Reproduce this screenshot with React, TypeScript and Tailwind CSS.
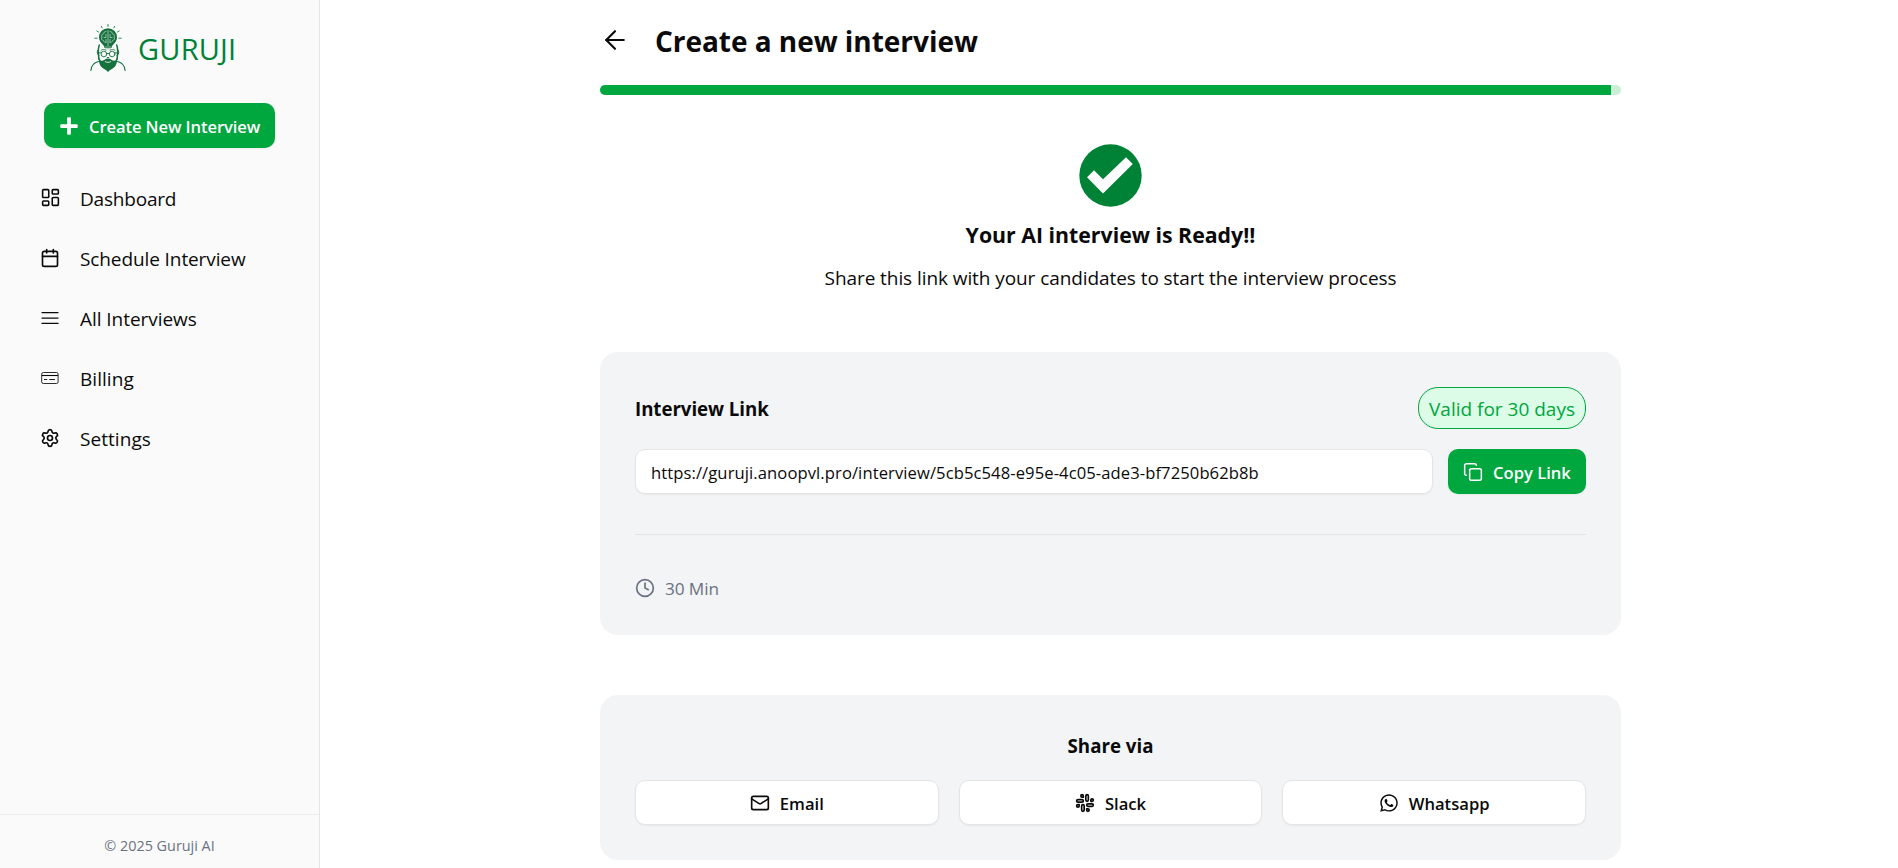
import React from "react";
import { ArrowLeft, Calendar, Clock, Copy, LayoutDashboard, Mail, Settings, Slack } from "lucide-react";
import { FaWhatsapp } from "react-icons/fa6";
import { FaPlus } from "react-icons/fa";

function Logo() {
  return (
    <svg viewBox="0 0 40 50" className="h-[50px] w-10 shrink-0" fill="none" stroke="#17713f" strokeLinecap="round">
      <path d="M20 1.400v2M13.300 3.400l.8 1.500M26.700 3.400l-.8 1.500M8.900 8l1.600 1M31.100 8l-1.600 1M6.800 15.200h2.200M33.200 15.200H31" strokeWidth=".9" />
      <path d="M20 5.200a9 9 0 0 0-9 9c0 3.400 1.900 5.400 3.700 7.300 1 1.100 1.500 2 1.800 3.500h7c.3-1.500.8-2.400 1.800-3.500 1.800-1.900 3.700-3.900 3.700-7.300a9 9 0 0 0-9-9z" fill="#17713f" stroke="none" />
      <path d="M20 7.500v15M18 8.500c-2 0-2.400 1.300-2.200 2.200-2 .2-2.600 2-1.800 3.300-1 1.500-.2 3.300 1.500 3.500.2 1.500 1.200 2 2.500 1.800M22 8.500c2 0 2.400 1.300 2.200 2.200 2 .2 2.600 2 1.800 3.300 1 1.500.2 3.300-1.500 3.500-.2 1.500-1.200 2-2.500 1.800M18 11.500v3h-2M22 11.500v3h2M18 16.500v3M22 16.500v3" stroke="#b9d6c5" strokeWidth=".75" />
      <path d="M17 24h6M17.500 25.800h5" stroke="#8fbca2" strokeWidth=".9" />
      <path d="M11.300 22c-.8 2-1 4-1 6.500l.6 8M28.700 22c.8 2 1 4 1 6.500l-.6 8" strokeWidth="1.500" />
      <path d="M10 27c-1.300.5-1 4.500.8 5.500M30 27c1.300.5 1 4.500-.8 5.500" strokeWidth="1" />
      <path d="M13 27.300c1.500-1.200 3.500-1.200 5 0M27 27.300c-1.500-1.200-3.500-1.200-5 0" strokeWidth=".8" />
      <circle cx="15.900" cy="31" r="2.800" strokeWidth=".9" />
      <circle cx="24.100" cy="31" r="2.800" strokeWidth=".9" />
      <path d="M18.700 30.500h2.600M11 29.800h2M29 29.800h-2M19.200 34.500h1.600" strokeWidth=".9" />
      <path d="M10.800 33.500c.5 3 1.700 4.300 3 4.300 2.200 0 3.200-2.300 6.200-2.300s4 2.300 6.200 2.300c1.300 0 2.500-1.300 3-4.300.3 3.500-.3 6.800-1.600 9.300C26 45.500 22 46.500 20 49c-2-2.500-6-3.500-7.600-6.200-1.300-2.500-1.900-5.800-1.600-9.300z" fill="#17713f" stroke="none" />
      <path d="M17.300 38.700c1.500.9 3.900.9 5.400 0" stroke="#e6f0ea" strokeWidth=".9" />
      <path d="M10.500 38.500C6 39.700 3.200 41.700 2.900 47.500M29.500 38.500c4.500 1.200 7.300 3.200 7.600 9" strokeWidth="1.100" />
    </svg>
  );
}

function LinesIcon() {
  return (
    <svg viewBox="0 0 20 20" className="size-5" stroke="currentColor" strokeLinecap="round">
      <path d="M2 4.600h16M2 10h16M2 15.400h16" strokeWidth="1.250" />
    </svg>
  );
}

function CardIcon() {
  return (
    <svg viewBox="0 0 20 20" className="size-5" fill="none" stroke="currentColor">
      <rect x="1.700" y="4.500" width="16.400" height="11" rx="1.600" strokeWidth=".85" />
      <path d="M1.700 7.500h16.400" strokeWidth="1.100" />
      <path d="M4 11.500h3.200M9.300 11.500h5.700" strokeWidth=".9" />
    </svg>
  );
}

const nav = [
  { label: "Dashboard", icon: <LayoutDashboard size={21} strokeWidth={1.8} className="-mt-px -ml-[0.5px]" />, cls: "tracking-[-0.2px]" },
  { label: "Schedule Interview", icon: <Calendar size={20} />, cls: "tracking-[-0.1px]" },
  { label: "All Interviews", icon: <LinesIcon />, cls: "tracking-[-0.05px]" },
  { label: "Billing", icon: <CardIcon />, cls: "tracking-[0.05px]" },
  { label: "Settings", icon: <Settings size={20} />, cls: "tracking-[0.05px]" },
];

const share = [
  { label: "Email", icon: <Mail size={20} /> },
  { label: "Slack", icon: <Slack size={20} /> },
  { label: "Whatsapp", icon: <FaWhatsapp size={20} /> },
];

export default function App() {
  return (
    <div className="flex h-[868px] overflow-hidden bg-white font-['Open_Sans',sans-serif] text-[19px] leading-[30px] text-neutral-950">
      <aside className="flex w-80 shrink-0 flex-col border-r border-[#e5e5e5] bg-[#fafafa]">
        <div className="flex h-[103px] items-start pl-[88px] pt-[23px]">
          <Logo />
          <span className="ml-[10px] mt-[2px] text-[29px] leading-[48px] tracking-[0.2px] text-[#008236]">GURUJI</span>
        </div>
        <button className="mx-11 flex h-[45px] w-[231px] items-center rounded-[10px] bg-[#00a63e] pl-[15px] text-[16.600px] font-semibold whitespace-nowrap text-white shadow-xs">
          <FaPlus size={20} className="mr-[10px]" />
          <span className="mt-[2px] tracking-[-0.1px]">Create New Interview</span>
        </button>
        <nav className="mt-5 flex flex-col">
          {nav.map((n) => (
            <a key={n.label} className="flex h-[60px] items-center pl-10">
              <span className="w-5 shrink-0">{n.icon}</span>
              <span className={"ml-5 mt-px " + n.cls}>{n.label}</span>
            </a>
          ))}
        </nav>
        <footer className="mt-auto flex h-[54px] justify-center border-t border-[#ececec] pt-4 text-[14.400px] text-[#6a7282]">© 2025 Guruji AI</footer>
      </aside>

      <main className="flex flex-1 flex-col pl-[280px]">
        <div className="w-[1021px]">
          <header className="flex h-[85px] items-center">
            <ArrowLeft size={30} strokeWidth={1.7} className="mt-[-5px]" />
            <h1 className="ml-[25px] mt-[-3px] text-[28px] font-bold tracking-[-0.04px]">Create a new interview</h1>
          </header>
          <div className="h-[10px] overflow-hidden rounded-full bg-[#cceed8]">
            <div className="h-full w-[99%] bg-[#00a63e]" />
          </div>

          <section className="flex h-[257px] flex-col items-center pt-[49px]">
            <svg viewBox="0 0 63 63" className="size-[63px]">
              <circle cx="31.500" cy="31.500" r="31.200" fill="#008236" />
              <path d="M8 33.300l7-7 9 9 23-22 6.800 6.800L24 49.500z" fill="#fff" />
            </svg>
            <h2 className="mt-[13px] text-[21.300px] font-bold">Your AI interview is Ready!!</h2>
            <p className="mt-[13px] tracking-[-0.075px]">Share this link with your candidates to start the interview process</p>
          </section>

          <section className="h-[283px] rounded-[18px] bg-[#f3f4f6] px-[35px] pt-[35px]">
            <div className="flex items-center justify-between">
              <h2 className="mt-[2px] text-[18.700px] font-bold tracking-[-0.05px]">Interview Link</h2>
              <span className="flex h-[42px] w-[168px] items-center justify-center rounded-[20px] border border-[#00a63e] bg-[#dcfce7] pt-px text-[#00a63e]">Valid for 30 days</span>
            </div>
            <div className="mt-5 flex gap-[15px]">
              <div className="flex h-[45px] flex-1 items-center rounded-[10px] border border-[#e5e5e5] bg-white px-[15px] text-[16.600px] shadow-xs">
                <span className="mt-[2px] tracking-[0.085px]">https://guruji.anoopvl.pro/interview/5cb5c548-e95e-4c05-ade3-bf7250b62b8b</span>
              </div>
              <button className="flex h-[45px] w-[138px] items-center rounded-[10px] bg-[#00a63e] pl-[15px] text-[16.600px] font-semibold whitespace-nowrap text-white shadow-xs">
                <Copy size={20} strokeWidth={1.8} className="mr-[10px]" />
                <span className="mt-[2px]">Copy Link</span>
              </button>
            </div>
            <div className="mt-10 h-px bg-[#e2e4e6]" />
            <div className="mt-[39px] flex items-center gap-[10px] text-[17.200px] text-[#6a7282]">
              <Clock size={20} className="mt-[-2px]" />
              <span className="tracking-[-0.1px]">30 Min</span>
            </div>
          </section>

          <section className="mt-[60px] h-[165px] rounded-[18px] bg-[#f3f4f6] px-[35px] pt-[36px]">
            <h2 className="text-center text-[18.700px] font-bold">Share via</h2>
            <div className="mt-[19px] grid grid-cols-3 gap-5">
              {share.map((s) => (
                <button key={s.label} className="flex h-[45px] items-center justify-center gap-[10px] rounded-[10px] border border-[#e5e5e5] bg-white text-[16.600px] font-semibold shadow-xs">
                  {s.icon}
                  <span className="mt-[2px]">{s.label}</span>
                </button>
              ))}
            </div>
          </section>
        </div>
      </main>
    </div>
  );
}
